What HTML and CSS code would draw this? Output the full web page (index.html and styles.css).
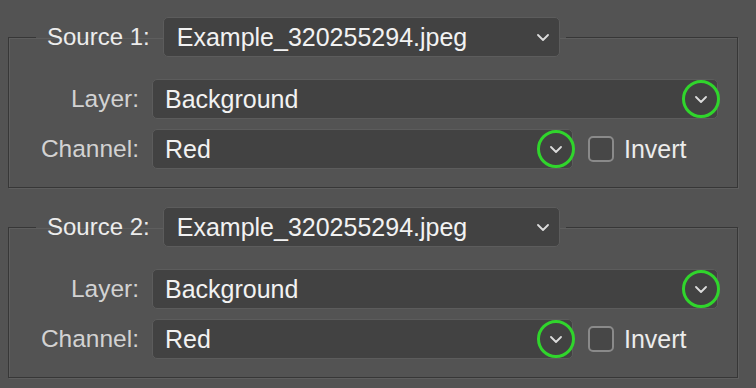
FILE: index.html
```html
<!DOCTYPE html>
<html lang="en">

<head>
  <meta charset="UTF-8">
  <title>Calculations</title>
  <link rel="stylesheet" href="styles.css">
</head>

<body>

  <fieldset class="source">
    <legend>
      <span class="source-label">Source 1:</span>
      <div class="select select-file">
        <span>Example_320255294.jpeg</span>
        <span class="arrow"><svg width="12" height="7" viewBox="0 0 12 7"><path d="M1 1L6 6L11 1" /></svg></span>
      </div>
    </legend>
    <div class="row">
      <label class="field-label">Layer:</label>
      <div class="select select-wide">
        <span>Background</span>
        <span class="arrow"><svg width="12" height="7" viewBox="0 0 12 7"><path d="M1 1L6 6L11 1" /></svg><span class="ring"></span></span>
      </div>
    </div>
    <div class="row">
      <label class="field-label">Channel:</label>
      <div class="select select-channel">
        <span>Red</span>
        <span class="arrow"><svg width="12" height="7" viewBox="0 0 12 7"><path d="M1 1L6 6L11 1" /></svg><span class="ring"></span></span>
      </div>
      <label class="check"><span class="box"></span>Invert</label>
    </div>
  </fieldset>

  <fieldset class="source">
    <legend>
      <span class="source-label">Source 2:</span>
      <div class="select select-file">
        <span>Example_320255294.jpeg</span>
        <span class="arrow"><svg width="12" height="7" viewBox="0 0 12 7"><path d="M1 1L6 6L11 1" /></svg></span>
      </div>
    </legend>
    <div class="row">
      <label class="field-label">Layer:</label>
      <div class="select select-wide">
        <span>Background</span>
        <span class="arrow"><svg width="12" height="7" viewBox="0 0 12 7"><path d="M1 1L6 6L11 1" /></svg><span class="ring"></span></span>
      </div>
    </div>
    <div class="row">
      <label class="field-label">Channel:</label>
      <div class="select select-channel">
        <span>Red</span>
        <span class="arrow"><svg width="12" height="7" viewBox="0 0 12 7"><path d="M1 1L6 6L11 1" /></svg><span class="ring"></span></span>
      </div>
      <label class="check"><span class="box"></span>Invert</label>
    </div>
  </fieldset>

</body>

</html>
```

FILE: styles.css
```css
body {
  margin: 0;
  padding-top: 17px;
  background-color: #535353;
  font-family: "Liberation Sans", Arial, sans-serif;
  font-size: 24px;
  color: #f0f0f0;
}

.source {
  margin: 0 18px 19px 8px;
  padding: 22px 19px 18px 0;
  border: 1px solid #373737;
  box-shadow: 1px 1px 0 #5e5e5e, inset 1px 1px 0 #5e5e5e;
}

.source legend {
  display: flex;
  align-items: center;
  gap: 13px;
  margin-left: 27px;
  padding: 0 6px 0 11px;
}

.source-label {
  color: #ececec;
}

.select {
  display: flex;
  align-items: center;
  justify-content: space-between;
  height: 40px;
  box-sizing: border-box;
  padding: 0 10px 0 12px;
  background: #424242;
  border: 1px solid #5c5c5c;
  border-radius: 5px;
  color: #f2f2f2;
  font-size: 25px;
}

.select-file {
  width: 397px;
  padding-left: 13px;
}

.select-wide {
  flex: 1;
}

.select-channel {
  width: 421px;
}

.arrow {
  position: relative;
  display: flex;
  width: 12px;
  height: 7px;
}

.arrow svg path {
  fill: none;
  stroke: #dcdcdc;
  stroke-width: 1.8;
  stroke-linecap: round;
  stroke-linejoin: round;
}

.ring {
  position: absolute;
  left: 50%;
  top: 50%;
  width: 38px;
  height: 38px;
  box-sizing: border-box;
  border: 3px solid #30d52c;
  border-radius: 50%;
  transform: translate(-50%, -50%);
}

.row {
  display: flex;
  align-items: center;
}

.row + .row {
  margin-top: 10px;
}

.field-label {
  width: 130px;
  margin-right: 13px;
  text-align: right;
  color: #d2d2d2;
  font-size: 24.5px;
}

.check {
  display: flex;
  align-items: center;
  gap: 10px;
  margin-left: 15px;
  color: #ececec;
  font-size: 25px;
}

.box {
  width: 26px;
  height: 26px;
  box-sizing: border-box;
  border: 2px solid #8a8a8a;
  border-radius: 5px;
  background: #474747;
}
```
